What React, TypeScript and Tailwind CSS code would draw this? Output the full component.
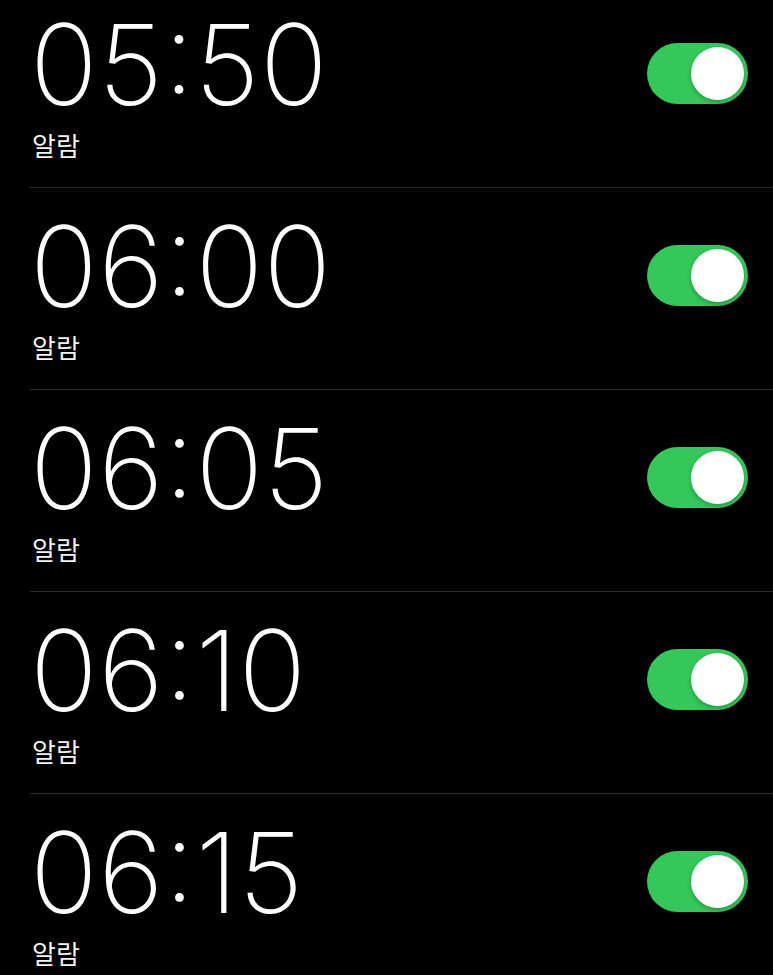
const alarms = ["05:50", "06:00", "06:05", "06:10", "06:15"];

function Toggle() {
  return (
    <div className="flex h-[61px] w-[101px] items-center justify-end rounded-full bg-[#34c759] pr-[4px]">
      <div className="h-[53px] w-[53px] rounded-full bg-white shadow-[0_2px_4px_rgba(0,0,0,0.25)]" />
    </div>
  );
}

function AlarmRow({ time }: { time: string }) {
  return (
    <div className="flex h-[202px] shrink-0 items-start justify-between border-b border-[#2a2a2a] pr-[25px]">
      <div className="pt-[22px]">
        <p className="font-['Inter',sans-serif] text-[112px] font-extralight leading-none tracking-[0.5px] text-white [font-feature-settings:'case']">
          {time}
        </p>
        <p className="ml-[2px] mt-[12px] font-['Noto_Sans_CJK_KR',sans-serif] text-[26px] leading-none text-[#f2f2f2]">
          알람
        </p>
      </div>
      <div className="mt-[57px]">
        <Toggle />
      </div>
    </div>
  );
}

export default function App() {
  return (
    <main className="h-[975px] w-[773px] overflow-hidden bg-black">
      <div className="-mt-[14px] ml-[30px] flex flex-col">
        {alarms.map((t) => (
          <AlarmRow key={t} time={t} />
        ))}
      </div>
    </main>
  );
}
